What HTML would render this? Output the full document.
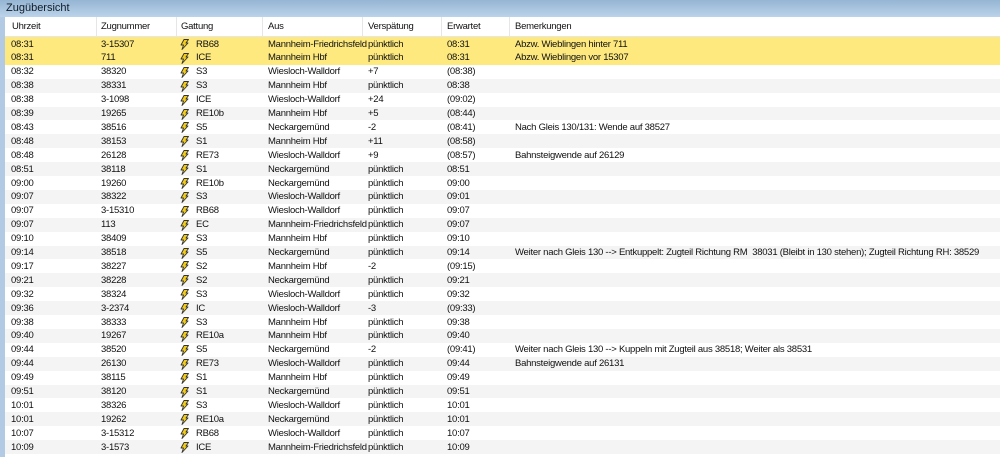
<html><head><style>
body{margin:0;width:1000px;height:457px;overflow:hidden;background:#fff;font-family:"Liberation Sans",sans-serif;font-size:9.5px;letter-spacing:-0.25px;color:#111;position:relative}
#t{position:absolute;left:0;top:0;width:1000px;height:17px;background:linear-gradient(#95b5d3,#bcd3ea);font-size:11px;letter-spacing:0;color:#111c28}
#t span{position:absolute;left:6px;top:2px}
#lb{position:absolute;left:0;top:17px;width:5px;height:440px;background:#b2cae4}
#h{position:absolute;left:5px;top:17px;width:995px;height:19px;border-bottom:1px solid #e6e6e6}
.c{position:absolute;white-space:nowrap}
.s{position:absolute;top:0;width:1px;height:19px;background:#e6e6e6}
.r{position:absolute;left:5px;width:995px;height:13.9px}
.r .c{top:1.5px}
.g{background:#f4f4f4}.y{background:#fde97e}
.i{position:absolute;top:2px;left:175px;width:9px;height:11px}
</style></head><body>
<div id="t"><span>Zugübersicht</span></div>
<div id="lb"></div>
<div id="h">
<span class="c" style="left:7px;top:4px">Uhrzeit</span>
<span class="c" style="left:96px;top:4px">Zugnummer</span>
<span class="c" style="left:176px;top:4px">Gattung</span>
<span class="c" style="left:263px;top:4px">Aus</span>
<span class="c" style="left:363px;top:4px">Verspätung</span>
<span class="c" style="left:442px;top:4px">Erwartet</span>
<span class="c" style="left:510px;top:4px">Bemerkungen</span>
<div class="s" style="left:91px"></div><div class="s" style="left:171px"></div><div class="s" style="left:257px"></div><div class="s" style="left:357px"></div><div class="s" style="left:436px"></div><div class="s" style="left:504px"></div>
</div>
<div id="rows"></div>
<script>
var d=[
["08:31","3-15307","RB68","Mannheim-Friedrichsfeld","pünktlich","08:31","Abzw. Wieblingen hinter 711"],
["08:31","711","ICE","Mannheim Hbf","pünktlich","08:31","Abzw. Wieblingen vor 15307"],
["08:32","38320","S3","Wiesloch-Walldorf","+7","(08:38)",""],
["08:38","38331","S3","Mannheim Hbf","pünktlich","08:38",""],
["08:38","3-1098","ICE","Wiesloch-Walldorf","+24","(09:02)",""],
["08:39","19265","RE10b","Mannheim Hbf","+5","(08:44)",""],
["08:43","38516","S5","Neckargemünd","-2","(08:41)","Nach Gleis 130/131: Wende auf 38527"],
["08:48","38153","S1","Mannheim Hbf","+11","(08:58)",""],
["08:48","26128","RE73","Wiesloch-Walldorf","+9","(08:57)","Bahnsteigwende auf 26129"],
["08:51","38118","S1","Neckargemünd","pünktlich","08:51",""],
["09:00","19260","RE10b","Neckargemünd","pünktlich","09:00",""],
["09:07","38322","S3","Wiesloch-Walldorf","pünktlich","09:01",""],
["09:07","3-15310","RB68","Wiesloch-Walldorf","pünktlich","09:07",""],
["09:07","113","EC","Mannheim-Friedrichsfeld","pünktlich","09:07",""],
["09:10","38409","S3","Mannheim Hbf","pünktlich","09:10",""],
["09:14","38518","S5","Neckargemünd","pünktlich","09:14","Weiter nach Gleis 130 --&gt; Entkuppelt: Zugteil Richtung RM&nbsp; 38031 (Bleibt in 130 stehen); Zugteil Richtung RH: 38529"],
["09:17","38227","S2","Mannheim Hbf","-2","(09:15)",""],
["09:21","38228","S2","Neckargemünd","pünktlich","09:21",""],
["09:32","38324","S3","Wiesloch-Walldorf","pünktlich","09:32",""],
["09:36","3-2374","IC","Wiesloch-Walldorf","-3","(09:33)",""],
["09:38","38333","S3","Mannheim Hbf","pünktlich","09:38",""],
["09:40","19267","RE10a","Mannheim Hbf","pünktlich","09:40",""],
["09:44","38520","S5","Neckargemünd","-2","(09:41)","Weiter nach Gleis 130 --&gt; Kuppeln mit Zugteil aus 38518; Weiter als 38531"],
["09:44","26130","RE73","Wiesloch-Walldorf","pünktlich","09:44","Bahnsteigwende auf 26131"],
["09:49","38115","S1","Mannheim Hbf","pünktlich","09:49",""],
["09:51","38120","S1","Neckargemünd","pünktlich","09:51",""],
["10:01","38326","S3","Wiesloch-Walldorf","pünktlich","10:01",""],
["10:01","19262","RE10a","Neckargemünd","pünktlich","10:01",""],
["10:07","3-15312","RB68","Wiesloch-Walldorf","pünktlich","10:07",""],
["10:09","3-1573","ICE","Mannheim-Friedrichsfeld","pünktlich","10:09",""]];
var bolt='<svg class="i" viewBox="0 0 9 11"><path d="M4 0.5H8.5L6 4H8L2 10.5L3.5 6H1Z" fill="#f3cc1a" stroke="#333" stroke-width="0.9" stroke-linejoin="round"/></svg>';
var h="";
d.forEach(function(r,i){var cl=i<2?"y":(i%2?"g":"");
h+='<div class="r '+cl+'" style="top:'+(37+i*13.9)+'px">'+
'<span class="c" style="left:6px">'+r[0]+'</span>'+
'<span class="c" style="left:96px">'+r[1]+'</span>'+bolt+
'<span class="c" style="left:191px">'+r[2]+'</span>'+
'<span class="c" style="left:263px">'+r[3]+'</span>'+
'<span class="c" style="left:363px">'+r[4]+'</span>'+
'<span class="c" style="left:442px">'+r[5]+'</span>'+
'<span class="c" style="left:510px">'+r[6]+'</span></div>';});
document.getElementById("rows").innerHTML=h;
</script>
</body></html>
